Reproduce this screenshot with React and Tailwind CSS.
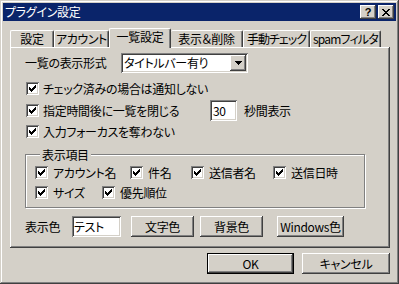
import React from "react";

const font =
  "font-['Noto_Sans_CJK_JP','Noto_Sans',sans-serif] [font-feature-settings:'palt']";

// classic 3D bevels
const raised =
  "shadow-[inset_-1px_-1px_0_#404040,inset_1px_1px_0_#ffffff,inset_-2px_-2px_0_#808080]";
const sunken =
  "shadow-[inset_1px_1px_0_#808080,inset_-1px_-1px_0_#ffffff,inset_2px_2px_0_#404040,inset_-2px_-2px_0_#d4d0c8]";

const tabs = [
  { label: "設定", w: "w-[44px]", t: "" },
  { label: "アカウント", w: "w-[55px]", t: "tracking-[-0.4px]" },
  { label: "一覧設定", w: "w-[62px]", t: "", active: true },
  { label: "表示＆削除", w: "w-[72px]", t: "", hidden: true },
  { label: "手動チェック", w: "w-[67px]", t: "tracking-[-1px]" },
  { label: "spamフィルタ", w: "w-[71px]", t: "tracking-[-0.8px]" },
];

const Check = () => (
  <span
    className={`flex h-[13px] w-[13px] shrink-0 items-center justify-center bg-white ${sunken}`}
  >
    <svg width="7" height="7" viewBox="0 0 7 7" shapeRendering="crispEdges">
      {[2, 3, 4, 3, 2, 1, 0].map((y, x) => (
        <rect key={x} x={x} y={y} width="1" height="3" fill="#000" />
      ))}
    </svg>
  </span>
);

const CheckItem = ({ label, gap = "gap-[4px]", className = "" }) => (
  <div className={`flex items-center ${gap} ${className}`}>
    <Check />
    <span className="whitespace-nowrap leading-[13px]">{label}</span>
  </div>
);

const Button = ({ children, className = "", isDefault }) =>
  isDefault ? (
    <div className={`border border-black bg-[#d4d0c8] ${className}`}>
      <div className={`flex h-full items-center justify-center ${raised}`}>
        {children}
      </div>
    </div>
  ) : (
    <div
      className={`flex items-center justify-center bg-[#d4d0c8] ${raised} ${className}`}
    >
      {children}
    </div>
  );

export default function App() {
  return (
    <div
      className={`h-[284px] w-[399px] bg-[#d4d0c8] p-[3px] text-[12px] leading-[12px] tracking-[-0.3px] text-black ${font} shadow-[inset_-1px_-1px_0_#404040,inset_1px_1px_0_#d4d0c8,inset_-2px_-2px_0_#808080,inset_2px_2px_0_#ffffff]`}
    >
      {/* Title bar */}
      <div className="flex h-[18px] items-center bg-[#0a246a] px-[2px]">
        <span className="whitespace-nowrap text-white">プラグイン設定</span>
        <div className="ml-auto flex gap-[2px]">
          <Button className="h-[14px] w-[16px]">
            <span className="font-['Liberation_Sans',sans-serif] text-[11px] font-bold leading-[11px]">
              ?
            </span>
          </Button>
          <Button className="h-[14px] w-[16px]">
            <svg width="8" height="7" viewBox="0 0 8 7" shapeRendering="crispEdges">
              {[0, 1, 2, 3, 2, 1, 0].map((d, y) => (
                <g key={y} fill="#000">
                  <rect x={d} y={y} width="2" height="1" />
                  <rect x={6 - d} y={y} width="2" height="1" />
                </g>
              ))}
            </svg>
          </Button>
        </div>
      </div>

      <div className="pl-[7px] pt-[7px]">
        {/* Tabs */}
        <div className="flex h-[19px] items-end">
          {tabs.map((t) =>
            t.active ? (
              <div
                key={t.label}
                className={`relative z-10 -mb-px flex h-[20px] ${t.w} items-center justify-center rounded-t-[2px] border-x border-t border-l-white border-r-[#404040] border-t-white bg-[#d4d0c8] pb-[3px] shadow-[inset_-1px_0_0_#808080]`}
              >
                <span className="whitespace-nowrap">{t.label}</span>
              </div>
            ) : (
              <div
                key={t.label}
                className={`flex h-[17px] ${t.w} items-center justify-center rounded-t-[2px] border-t border-r border-t-white border-r-[#404040] shadow-[inset_-1px_0_0_#808080] ${
                  t.hidden ? "" : "border-l border-l-white"
                }`}
              >
                <span className={`whitespace-nowrap ${t.t}`}>{t.label}</span>
              </div>
            )
          )}
        </div>

        {/* Panel */}
        <div
          className={`h-[201px] w-[380px] pl-[15px] pt-[6px] shadow-[inset_-1px_-1px_0_#404040,inset_1px_1px_0_#ffffff,inset_-2px_-2px_0_#808080]`}
        >
          <div className="flex h-[20px] items-center">
            <span className="w-[96px] whitespace-nowrap">一覧の表示形式</span>
            <div
              className={`flex h-[20px] w-[127px] items-center bg-white pl-[3px] pr-[2px] ${sunken}`}
            >
              <span className="flex-1 whitespace-nowrap">タイトルバー有り</span>
              <div
                className={`flex h-[16px] w-[16px] items-center justify-center bg-[#d4d0c8] ${raised}`}
              >
                <svg width="7" height="4" viewBox="0 0 7 4" shapeRendering="crispEdges">
                  {[0, 1, 2, 3].map((i) => (
                    <rect key={i} x={i} y={i} width={7 - 2 * i} height="1" fill="#000" />
                  ))}
                </svg>
              </div>
            </div>
          </div>

          <div className="ml-[1px] mt-[5px] flex h-[20px] items-center">
            <CheckItem label="チェック済みの場合は通知しない" />
          </div>
          <div className="ml-[1px] mt-[2px] flex h-[21px] items-center">
            <div className="w-[184px]">
              <CheckItem label="指定時間後に一覧を閉じる" />
            </div>
            <div
              className={`flex h-[21px] w-[27px] items-center bg-white pl-[3px] ${sunken}`}
            >
              30
            </div>
            <span className="ml-[7px] whitespace-nowrap">秒間表示</span>
          </div>
          <div className="ml-[1px] flex h-[20px] items-center">
            <CheckItem label="入力フォーカスを奪わない" />
          </div>

          {/* Group box */}
          <fieldset className="mt-[7px] w-[340px] border border-[#808080] pb-[8px] pl-[9px] shadow-[inset_1px_1px_0_#ffffff,1px_1px_0_#ffffff]">
            <legend className="ml-[5px] bg-[#d4d0c8] px-[2px] leading-[13px]">
              表示項目
            </legend>
            <div className="mt-[5px] flex h-[13px] items-center">
              <CheckItem label="アカウント名" gap="gap-[5px]" className="w-[95px]" />
              <CheckItem label="件名" gap="gap-[5px]" className="w-[61px]" />
              <CheckItem label="送信者名" gap="gap-[5px]" className="w-[82px]" />
              <CheckItem label="送信日時" gap="gap-[5px]" />
            </div>
            <div className="mt-[7px] flex h-[13px] items-center">
              <CheckItem label="サイズ" gap="gap-[5px]" className="w-[67px]" />
              <CheckItem label="優先順位" gap="gap-[5px]" />
            </div>
          </fieldset>

          <div className="mt-[8px] flex h-[21px] items-center">
            <span className="w-[47px] whitespace-nowrap">表示色</span>
            <div
              className={`flex h-[21px] w-[49px] items-center bg-white pl-[2px] ${sunken}`}
            >
              テスト
            </div>
            <Button className="ml-[10px] h-[21px] w-[63px]">文字色</Button>
            <Button className="ml-[6px] h-[21px] w-[63px]">背景色</Button>
            <Button className="ml-[14px] h-[21px] w-[67px]">Windows色</Button>
          </div>
        </div>

        {/* Dialog buttons */}
        <div className="mt-[5px] flex w-[380px] justify-end gap-[8px]">
          <Button isDefault className="h-[21px] w-[87px]">
            OK
          </Button>
          <Button className="h-[21px] w-[88px]">キャンセル</Button>
        </div>
      </div>
    </div>
  );
}
